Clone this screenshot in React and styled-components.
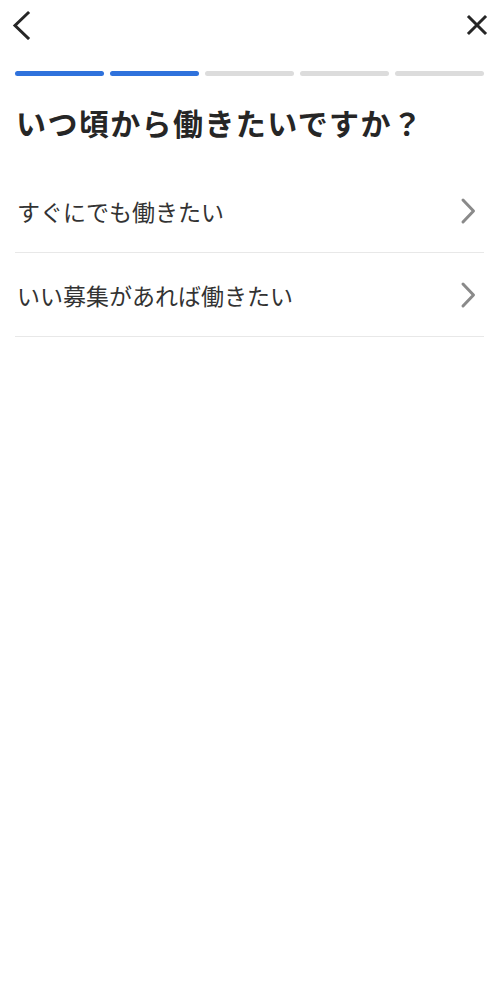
import React from "react";
import styled, { createGlobalStyle } from "styled-components";

const Global = createGlobalStyle`
  html, body { margin: 0; padding: 0; background: #fff; }
  body { font-family: "Noto Sans CJK JP", "Noto Sans", sans-serif; color: #2b2b2b; }
`;

const Page = styled.div`
  width: 498px;
  min-height: 992px;
  background: #fff;
  display: flex;
  flex-direction: column;
`;

const TopBar = styled.header`
  height: 50px;
  display: flex;
  align-items: center;
  justify-content: space-between;
  padding: 0 8px 0 8px;
`;

const IconButton = styled.button`
  width: 26px;
  height: 30px;
  border: none;
  background: none;
  padding: 0;
  display: flex;
  align-items: center;
  justify-content: center;
  cursor: pointer;
`;

const Progress = styled.div`
  display: flex;
  gap: 6px;
  padding: 0 14px 0 15px;
  margin-top: 21px;
`;

const Segment = styled.div`
  flex: 1;
  height: 5px;
  border-radius: 3px;
  background: ${(p) => (p.$done ? "#2f72dc" : "#dcdcdc")};
`;

const Title = styled.h1`
  margin: 24px 0 0 16px;
  font-size: 30px;
  line-height: 44px;
  font-weight: 700;
  color: #262626;
  letter-spacing: 1.4px;
`;

const List = styled.ul`
  list-style: none;
  margin: 25px 14px 0 15px;
  padding: 0;
`;

const Row = styled.li`
  height: 83px;
  border-bottom: 1px solid #e8e8e8;
  display: flex;
  align-items: center;
  justify-content: space-between;
  padding: 0 8px 0 2px;
  cursor: pointer;
`;

const RowLabel = styled.span`
  font-size: 23px;
  font-weight: 400;
  color: #333;
`;

const Back = () => (
  <svg width="20" height="30" viewBox="0 0 20 30">
    <path d="M17 3 L4 15.5 L17 28" fill="none" stroke="#262626" strokeWidth="3" strokeLinecap="square" />
  </svg>
);

const Close = () => (
  <svg width="22" height="22" viewBox="0 0 22 22">
    <path d="M3 3 L19 19 M19 3 L3 19" fill="none" stroke="#262626" strokeWidth="3" strokeLinecap="square" />
  </svg>
);

const Chevron = () => (
  <svg width="16" height="28" viewBox="0 0 16 28">
    <path d="M3 3 L13.5 14 L3 25" fill="none" stroke="#8a8a8a" strokeWidth="3" strokeLinecap="round" strokeLinejoin="round" />
  </svg>
);

const options = ["すぐにでも働きたい", "いい募集があれば働きたい"];

export default function App() {
  return (
    <Page>
      <Global />
      <TopBar>
        <IconButton aria-label="戻る"><Back /></IconButton>
        <IconButton aria-label="閉じる"><Close /></IconButton>
      </TopBar>
      <Progress>
        {[true, true, false, false, false].map((d, i) => (
          <Segment key={i} $done={d} />
        ))}
      </Progress>
      <Title>いつ頃から働きたいですか？</Title>
      <List>
        {options.map((o) => (
          <Row key={o}>
            <RowLabel>{o}</RowLabel>
            <Chevron />
          </Row>
        ))}
      </List>
    </Page>
  );
}
